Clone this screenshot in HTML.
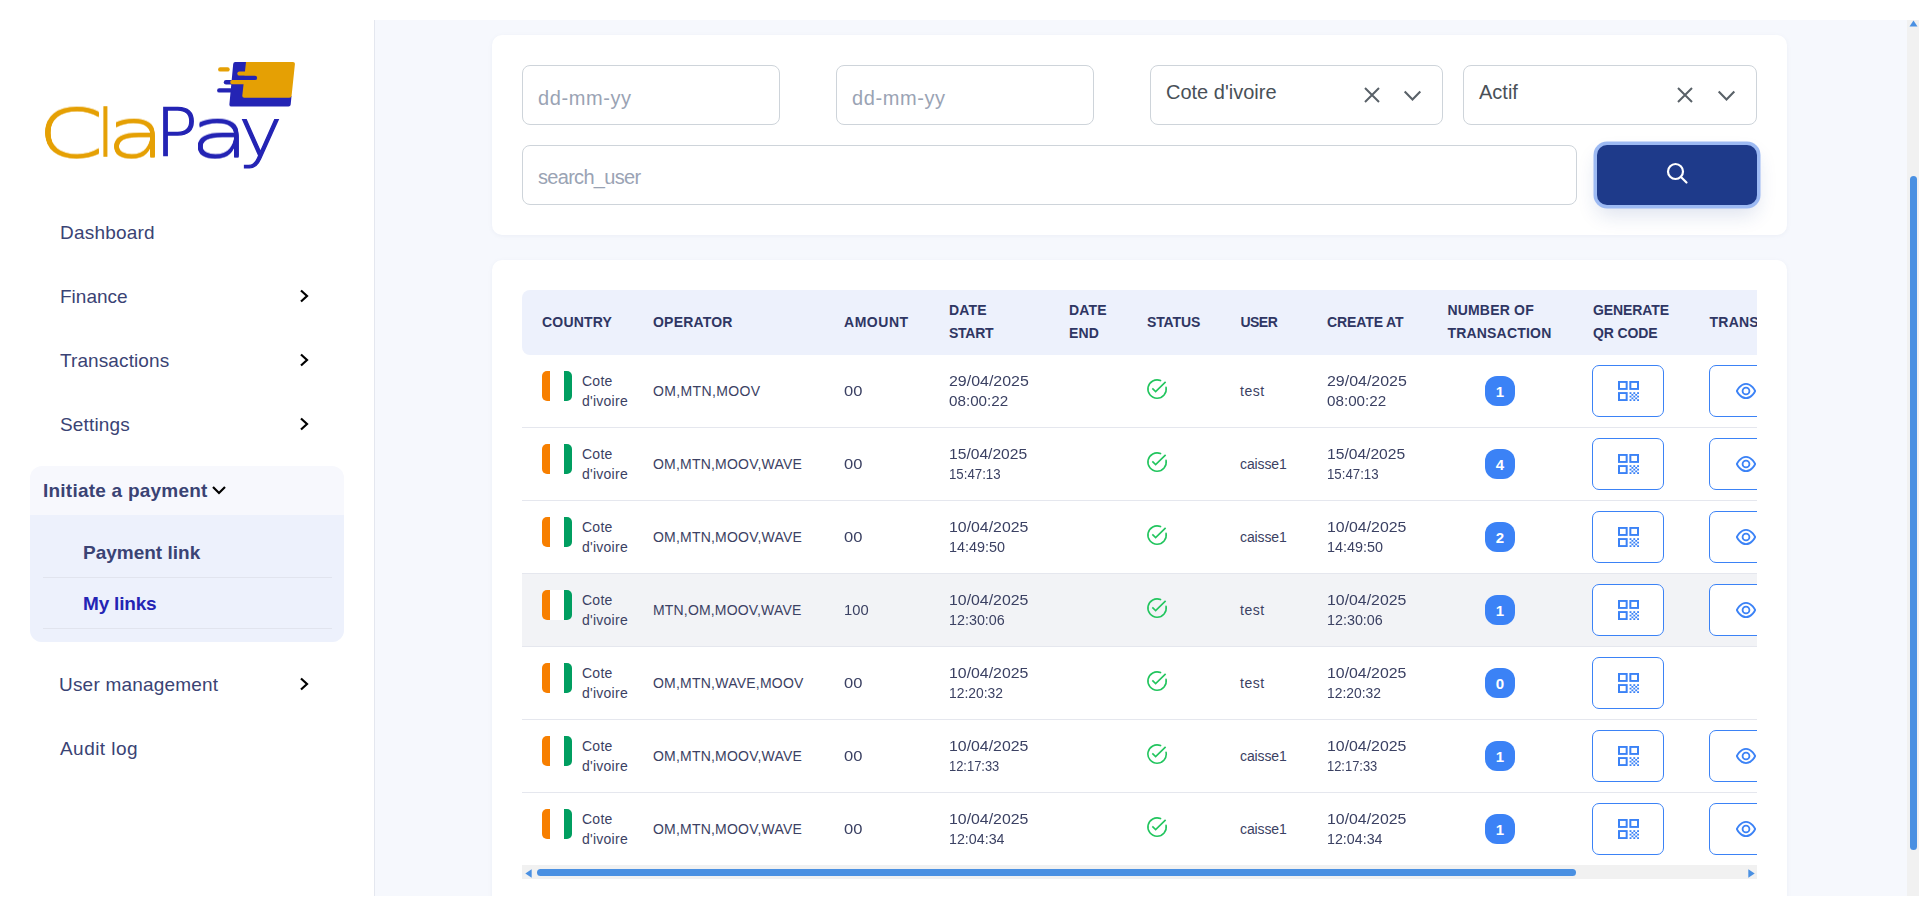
<!DOCTYPE html>
<html lang="en"><head><meta charset="utf-8"><title>ClaPay - My links</title>
<style>
*{box-sizing:border-box;margin:0;padding:0}
html,body{width:1919px;height:913px;overflow:hidden;background:#fff;font-family:"Liberation Sans",sans-serif}
#side{position:absolute;left:0;top:0;width:374px;height:913px;background:#fff}
#main{position:absolute;left:374px;top:20px;width:1545px;height:876px;background:#f6f8fd;border-left:1px solid #e4e7ef;overflow:hidden}
.nav{position:absolute;left:60px;font-size:19px;color:#3a4374;white-space:nowrap;line-height:22px}
.chev{position:absolute;left:299px;width:10px;height:14px}
#grp{position:absolute;left:30px;top:466px;width:314px;height:176px;border-radius:12px;background:#f7f8fd;overflow:hidden}
#grp .sub{position:absolute;left:0;top:49px;width:314px;height:127px;background:#edf1fc}
#grp .hd{position:absolute;left:13px;top:14px;font-size:19px;font-weight:700;color:#3a4374;white-space:nowrap;line-height:22px}
#grp .it{position:absolute;left:53px;font-size:19px;font-weight:700;color:#3a4374;white-space:nowrap;line-height:22px}
#grp .ln{position:absolute;left:13px;width:289px;height:1px;background:#e1e4ee}
.card{position:absolute;background:#fff;border-radius:10px;box-shadow:0 1px 4px rgba(120,130,160,.08)}
#c1{left:117px;top:15px;width:1295px;height:200px}
#c2{left:117px;top:240px;width:1295px;height:700px}
.inp{position:absolute;height:60px;border:1px solid #ced4da;border-radius:8px;background:#fff;font-size:20px;color:#9aa3b4;line-height:58px;padding-left:15px;padding-top:3px;white-space:nowrap}
.sel{color:#495057}
.sel span.t{position:relative;top:-6px}
.xi{position:absolute;top:21px;width:16px;height:16px}
.di{position:absolute;top:23px;width:19px;height:12.500px}
#sbtn{position:absolute;left:1105px;top:110px;width:160px;height:60px;border-radius:10px;background:#1e3a8a;box-shadow:0 0 0 3.500px #9dbaf3,0 10px 20px rgba(30,58,138,.15)}
#sbtn svg{position:absolute;left:68px;top:16px}
#tbl{position:absolute;left:30px;top:30px;width:1235px;height:589px;overflow:hidden}
#th{position:absolute;left:0;top:0;width:1400px;height:65px;background:#edf1fc;border-radius:8px 0 0 8px}
.h{position:absolute;font-size:14px;font-weight:700;color:#2f3663;line-height:23px;white-space:nowrap;letter-spacing:.2px}
.h1{top:20.6px}.h2{top:9.4px}
.tr{position:absolute;left:0;width:1400px;height:73px;border-bottom:1px solid #e5e7ee}
.tr.hov{background:#f2f3f6}
.flag{position:absolute;left:20px;top:16px;width:30px;height:30px;border-radius:5px;overflow:hidden;background:#fff}
.flag i{position:absolute;top:0;height:30px;width:8px}
.flag .o{left:0;background:#f77f00}
.flag .g{right:0;background:#009e60}
.c{position:absolute;font-size:14px;color:#3b4163;line-height:20px;white-space:nowrap}
.cn{left:60px;top:16px;letter-spacing:.25px}
.op{left:131px;top:26px}
.am{left:322px;top:26px}
.ds{left:427px;top:16px}
.st{left:624px;top:23px}
.us{left:718px;top:26px}
.ca{left:805px;top:16px}
.badge{position:absolute;left:963px;top:21px;width:30px;height:30px;border-radius:12px;background:#3b82f6;color:#fff;font-size:15px;font-weight:700;text-align:center;line-height:31px}
.btn{position:absolute;top:10px;width:72px;height:52px;border:1px solid #3b82f6;border-radius:7px;background:#fff}
.qrb{left:1070px}
.eyb{left:1187px}
.qrb svg{position:absolute;left:25px;top:15px}
.eyb svg{position:absolute;left:25.500px;top:15px}
#hs{position:absolute;left:0;top:575px;width:1235px;height:14px;background:#f1f1f1}
#hs .thumb{position:absolute;left:15px;top:4px;width:1039px;height:7px;border-radius:4px;background:#4a90e2}
#vs{position:absolute;left:1532px;top:0;width:12px;height:876px;background:#f1f1f1}
#vs .thumb{position:absolute;left:3px;top:156px;width:7px;height:674px;border-radius:4px;background:#4a90e2}
.fx{display:inline-block;transform-origin:0 50%;white-space:nowrap}

</style></head><body>
<div id="side">
<svg id="logo" style="position:absolute;left:0;top:0" width="374" height="200" viewBox="0 0 374 200" role="img" aria-label="ClaPay">
<path d="M235.200 62.100H262V96H291.500l-.8 8.500q-.2 2-2.200 2H231.400q-2.200 0-2-2.200L233.200 64q.2-1.900 2-1.900z" fill="#2424b4"/>
<path d="M246 62.100h47q2.100 0 1.900 2.100L291.600 95.700q-.2 2-2.200 2H244.200q-2.100 0-1.900-2.100z" fill="#e5a004"/>
<g stroke-linecap="round" stroke-width="4.400" fill="none">
<path d="M220.300 69.400h7.200" stroke="#e5a004"/>
<path d="M239.500 73.600h8" stroke="#e5a004"/>
<path d="M239.500 77.900h15.400" stroke="#2424b4"/>
<path d="M226 82.300h5" stroke="#2424b4"/>
<path d="M232.400 82.100h13" stroke="#e5a004"/>
<path d="M219.300 90.400h11" stroke="#2424b4"/>
</g>
<g font-family="'DejaVu Sans Light','DejaVu Sans',sans-serif" font-weight="200" font-size="100"><text transform="matrix(0.9500 0 0 0.6645 37.60 156.94)" fill="#e5a004" style="filter:drop-shadow(0 1.05px 0 #e5a004) drop-shadow(0 -1.05px 0 #e5a004)">C</text><text transform="matrix(0.6000 0 0 0.6368 97.35 156.25)" fill="#e5a004" stroke="#e5a004" stroke-width="1.3" vector-effect="non-scaling-stroke">l</text><text transform="matrix(0.9643 0 0 0.6614 106.49 156.54)" fill="#e5a004" style="filter:drop-shadow(0 1.06px 0 #e5a004) drop-shadow(0 -1.06px 0 #e5a004)">a</text><text transform="matrix(0.7024 0 0 0.6630 155.32 156.25)" fill="#2424b4" stroke="#2424b4" stroke-width="1.3" vector-effect="non-scaling-stroke">P</text><text transform="matrix(0.9714 0 0 0.6614 190.03 156.54)" fill="#2424b4" style="filter:drop-shadow(0 1.06px 0 #2424b4) drop-shadow(0 -1.06px 0 #2424b4)">a</text><text transform="matrix(0.7340 0 0 0.6575 238.65 156.16)" fill="#2424b4" stroke="#2424b4" stroke-width="1.3" vector-effect="non-scaling-stroke">y</text></g>
</svg>
<div class="nav" style="top:222px;letter-spacing:.2px">Dashboard</div>
<div class="nav" style="top:286px">Finance</div>
<div class="nav" style="top:350px;letter-spacing:.1px">Transactions</div>
<div class="nav" style="top:414px;letter-spacing:.15px">Settings</div>
<svg class="chev" style="top:289px" viewBox="0 0 10 14"><path d="M2 1.500 8 7 2 12.500" fill="none" stroke="#000" stroke-width="2.200"/></svg>
<svg class="chev" style="top:353px" viewBox="0 0 10 14"><path d="M2 1.500 8 7 2 12.500" fill="none" stroke="#000" stroke-width="2.200"/></svg>
<svg class="chev" style="top:417px" viewBox="0 0 10 14"><path d="M2 1.500 8 7 2 12.500" fill="none" stroke="#000" stroke-width="2.200"/></svg>
<div id="grp"><div class="sub"></div>
<div class="hd" style="letter-spacing:.23px">Initiate a payment</div>
<svg style="position:absolute;left:181px;top:19px" width="16" height="11" viewBox="0 0 16 11"><path d="M2 2 8 8 14 2" fill="none" stroke="#000" stroke-width="2.200"/></svg>
<div class="it" style="top:76px">Payment link</div>
<div class="ln" style="top:111px"></div>
<div class="it" style="top:127px;color:#2424b4;letter-spacing:-.2px">My links</div>
<div class="ln" style="top:162px"></div>
</div>
<div class="nav" style="top:674px;left:59px;letter-spacing:.2px">User management</div>
<svg class="chev" style="top:677px" viewBox="0 0 10 14"><path d="M2 1.500 8 7 2 12.500" fill="none" stroke="#000" stroke-width="2.200"/></svg>
<div class="nav" style="top:738px;letter-spacing:.45px">Audit log</div>
</div>
<div id="main">
<div class="card" id="c1">
<div class="inp" style="left:30px;top:30px;width:258px"><span style="letter-spacing:.6px">dd-mm-yy</span></div>
<div class="inp" style="left:344px;top:30px;width:258px"><span style="letter-spacing:.6px">dd-mm-yy</span></div>
<div class="inp sel" style="left:658px;top:30px;width:293px"><span class="t">Cote d'ivoire</span>
<svg class="xi" style="left:213px" viewBox="0 0 16 16"><path d="M1 1l14 14M15 1 1 15" stroke="#596168" stroke-width="2" fill="none"/></svg>
<svg class="di" style="left:251.500px" viewBox="0 0 18 12"><path d="M1.500 2.500 9 10l7.500-7.500" stroke="#596168" stroke-width="2" fill="none"/></svg></div>
<div class="inp sel" style="left:971px;top:30px;width:294px"><span class="t">Actif</span>
<svg class="xi" style="left:213px" viewBox="0 0 16 16"><path d="M1 1l14 14M15 1 1 15" stroke="#596168" stroke-width="2" fill="none"/></svg>
<svg class="di" style="left:252.500px" viewBox="0 0 18 12"><path d="M1.500 2.500 9 10l7.500-7.500" stroke="#596168" stroke-width="2" fill="none"/></svg></div>
<div class="inp" style="left:30px;top:110px;width:1055px"><span style="letter-spacing:-.7px;position:relative;top:-1px">search_user</span></div>
<div id="sbtn"><svg width="24" height="24" viewBox="0 0 24 24" fill="none" stroke="#fff" stroke-width="2.200" stroke-linecap="round"><circle cx="10.500" cy="10.500" r="7.500"/><path d="M16 16l5.500 5.500"/></svg></div>
</div>
<div class="card" id="c2">
<div id="tbl">
<div id="th">
<div class="h h1" style="left:20px">COUNTRY</div>
<div class="h h1" style="left:131px">OPERATOR</div>
<div class="h h1" style="left:322px;letter-spacing:.53px">AMOUNT</div>
<div class="h h2" style="left:427px">DATE<br><span style="letter-spacing:-.24px">START</span></div>
<div class="h h2" style="left:547px">DATE<br>END</div>
<div class="h h1" style="left:625px;letter-spacing:-.13px">STATUS</div>
<div class="h h1" style="left:718.500px;letter-spacing:-.55px">USER</div>
<div class="h h1" style="left:805px;letter-spacing:-.11px">CREATE AT</div>
<div class="h h2" style="left:925.4px">NUMBER OF<br>TRANSACTION</div>
<div class="h h2" style="left:1071px;letter-spacing:-.11px">GENERATE<br>QR CODE</div>
<div class="h h1" style="left:1187.6px">TRANSACTION</div>
</div>

<div class="tr" style="top:65px">
<div class="flag"><i class="o"></i><i class="g"></i></div>
<div class="c cn">Cote<br>d'ivoire</div>
<div class="c op"><span style="letter-spacing:0.369px">OM,MTN,MOOV</span></div>
<div class="c am"><span class="fx" style="transform:scaleX(1.1811)">00</span></div>
<div class="c ds"><span class="fx" style="transform:scaleX(1.1387)">29/04/2025</span><br><span class="fx" style="transform:scaleX(1.0862)">08:00:22</span></div>
<div class="c st"><svg class="chk" viewBox="0 0 24 24" width="22" height="22" fill="none" stroke="#22c55e" stroke-width="1.750" stroke-linejoin="miter"><path d="M21.900 10.200a10 10 0 1 1-6-7.400" stroke-linecap="round"/><path d="M6.900 11.400l3.600 3.500L21.400 4.300"/></svg></div>
<div class="c us"><span style="letter-spacing:0.505px">test</span></div>
<div class="c ca"><span class="fx" style="transform:scaleX(1.1387)">29/04/2025</span><br><span class="fx" style="transform:scaleX(1.0862)">08:00:22</span></div>
<div class="badge">1</div>
<div class="btn qrb"><svg class="qr" viewBox="0 0 20 20" width="21" height="20" preserveAspectRatio="none" fill="none" stroke="#3b82f6" stroke-width="1.900"><rect x="0.950" y="0.950" width="7.300" height="7"/><rect x="11.750" y="0.950" width="7.300" height="7"/><rect x="0.950" y="12.050" width="7.300" height="7"/><g fill="#3b82f6" stroke="none"><rect x="11.00" y="11.20" width="1.8" height="1.76"/><rect x="14.60" y="11.20" width="1.8" height="1.76"/><rect x="18.20" y="11.20" width="1.8" height="1.76"/><rect x="12.80" y="12.96" width="1.8" height="1.76"/><rect x="16.40" y="12.96" width="1.8" height="1.76"/><rect x="11.00" y="14.72" width="1.8" height="1.76"/><rect x="14.60" y="14.72" width="1.8" height="1.76"/><rect x="18.20" y="14.72" width="1.8" height="1.76"/><rect x="12.80" y="16.48" width="1.8" height="1.76"/><rect x="16.40" y="16.48" width="1.8" height="1.76"/><rect x="11.00" y="18.24" width="1.8" height="1.76"/><rect x="14.60" y="18.24" width="1.8" height="1.76"/><rect x="18.20" y="18.24" width="1.8" height="1.76"/></g></svg></div>
<div class="btn eyb"><svg class="eye" viewBox="0 0 24 24" width="20" height="20" fill="none" stroke="#3b82f6" stroke-width="2.200" stroke-linecap="round" stroke-linejoin="round"><path d="M1 12s4-8.600 11-8.600S23 12 23 12s-4 8.600-11 8.600S1 12 1 12z"/><circle cx="12" cy="12" r="4.100"/></svg></div>
</div>
<div class="tr" style="top:138px">
<div class="flag"><i class="o"></i><i class="g"></i></div>
<div class="c cn">Cote<br>d'ivoire</div>
<div class="c op"><span style="letter-spacing:0.205px">OM,MTN,MOOV,WAVE</span></div>
<div class="c am"><span class="fx" style="transform:scaleX(1.1811)">00</span></div>
<div class="c ds"><span class="fx" style="transform:scaleX(1.1159)">15/04/2025</span><br><span class="fx" style="transform:scaleX(0.9468)">15:47:13</span></div>
<div class="c st"><svg class="chk" viewBox="0 0 24 24" width="22" height="22" fill="none" stroke="#22c55e" stroke-width="1.750" stroke-linejoin="miter"><path d="M21.900 10.200a10 10 0 1 1-6-7.400" stroke-linecap="round"/><path d="M6.900 11.400l3.600 3.500L21.400 4.300"/></svg></div>
<div class="c us"><span style="letter-spacing:-0.124px">caisse1</span></div>
<div class="c ca"><span class="fx" style="transform:scaleX(1.1159)">15/04/2025</span><br><span class="fx" style="transform:scaleX(0.9468)">15:47:13</span></div>
<div class="badge">4</div>
<div class="btn qrb"><svg class="qr" viewBox="0 0 20 20" width="21" height="20" preserveAspectRatio="none" fill="none" stroke="#3b82f6" stroke-width="1.900"><rect x="0.950" y="0.950" width="7.300" height="7"/><rect x="11.750" y="0.950" width="7.300" height="7"/><rect x="0.950" y="12.050" width="7.300" height="7"/><g fill="#3b82f6" stroke="none"><rect x="11.00" y="11.20" width="1.8" height="1.76"/><rect x="14.60" y="11.20" width="1.8" height="1.76"/><rect x="18.20" y="11.20" width="1.8" height="1.76"/><rect x="12.80" y="12.96" width="1.8" height="1.76"/><rect x="16.40" y="12.96" width="1.8" height="1.76"/><rect x="11.00" y="14.72" width="1.8" height="1.76"/><rect x="14.60" y="14.72" width="1.8" height="1.76"/><rect x="18.20" y="14.72" width="1.8" height="1.76"/><rect x="12.80" y="16.48" width="1.8" height="1.76"/><rect x="16.40" y="16.48" width="1.8" height="1.76"/><rect x="11.00" y="18.24" width="1.8" height="1.76"/><rect x="14.60" y="18.24" width="1.8" height="1.76"/><rect x="18.20" y="18.24" width="1.8" height="1.76"/></g></svg></div>
<div class="btn eyb"><svg class="eye" viewBox="0 0 24 24" width="20" height="20" fill="none" stroke="#3b82f6" stroke-width="2.200" stroke-linecap="round" stroke-linejoin="round"><path d="M1 12s4-8.600 11-8.600S23 12 23 12s-4 8.600-11 8.600S1 12 1 12z"/><circle cx="12" cy="12" r="4.100"/></svg></div>
</div>
<div class="tr" style="top:211px">
<div class="flag"><i class="o"></i><i class="g"></i></div>
<div class="c cn">Cote<br>d'ivoire</div>
<div class="c op"><span style="letter-spacing:0.205px">OM,MTN,MOOV,WAVE</span></div>
<div class="c am"><span class="fx" style="transform:scaleX(1.1811)">00</span></div>
<div class="c ds"><span class="fx" style="transform:scaleX(1.1330)">10/04/2025</span><br><span class="fx" style="transform:scaleX(1.0275)">14:49:50</span></div>
<div class="c st"><svg class="chk" viewBox="0 0 24 24" width="22" height="22" fill="none" stroke="#22c55e" stroke-width="1.750" stroke-linejoin="miter"><path d="M21.900 10.200a10 10 0 1 1-6-7.400" stroke-linecap="round"/><path d="M6.900 11.400l3.600 3.500L21.400 4.300"/></svg></div>
<div class="c us"><span style="letter-spacing:-0.124px">caisse1</span></div>
<div class="c ca"><span class="fx" style="transform:scaleX(1.1330)">10/04/2025</span><br><span class="fx" style="transform:scaleX(1.0275)">14:49:50</span></div>
<div class="badge">2</div>
<div class="btn qrb"><svg class="qr" viewBox="0 0 20 20" width="21" height="20" preserveAspectRatio="none" fill="none" stroke="#3b82f6" stroke-width="1.900"><rect x="0.950" y="0.950" width="7.300" height="7"/><rect x="11.750" y="0.950" width="7.300" height="7"/><rect x="0.950" y="12.050" width="7.300" height="7"/><g fill="#3b82f6" stroke="none"><rect x="11.00" y="11.20" width="1.8" height="1.76"/><rect x="14.60" y="11.20" width="1.8" height="1.76"/><rect x="18.20" y="11.20" width="1.8" height="1.76"/><rect x="12.80" y="12.96" width="1.8" height="1.76"/><rect x="16.40" y="12.96" width="1.8" height="1.76"/><rect x="11.00" y="14.72" width="1.8" height="1.76"/><rect x="14.60" y="14.72" width="1.8" height="1.76"/><rect x="18.20" y="14.72" width="1.8" height="1.76"/><rect x="12.80" y="16.48" width="1.8" height="1.76"/><rect x="16.40" y="16.48" width="1.8" height="1.76"/><rect x="11.00" y="18.24" width="1.8" height="1.76"/><rect x="14.60" y="18.24" width="1.8" height="1.76"/><rect x="18.20" y="18.24" width="1.8" height="1.76"/></g></svg></div>
<div class="btn eyb"><svg class="eye" viewBox="0 0 24 24" width="20" height="20" fill="none" stroke="#3b82f6" stroke-width="2.200" stroke-linecap="round" stroke-linejoin="round"><path d="M1 12s4-8.600 11-8.600S23 12 23 12s-4 8.600-11 8.600S1 12 1 12z"/><circle cx="12" cy="12" r="4.100"/></svg></div>
</div>
<div class="tr hov" style="top:284px">
<div class="flag"><i class="o"></i><i class="g"></i></div>
<div class="c cn">Cote<br>d'ivoire</div>
<div class="c op"><span style="letter-spacing:0.168px">MTN,OM,MOOV,WAVE</span></div>
<div class="c am"><span class="fx" style="transform:scaleX(1.0531)">100</span></div>
<div class="c ds"><span class="fx" style="transform:scaleX(1.1330)">10/04/2025</span><br><span class="fx" style="transform:scaleX(1.0239)">12:30:06</span></div>
<div class="c st"><svg class="chk" viewBox="0 0 24 24" width="22" height="22" fill="none" stroke="#22c55e" stroke-width="1.750" stroke-linejoin="miter"><path d="M21.900 10.200a10 10 0 1 1-6-7.400" stroke-linecap="round"/><path d="M6.900 11.400l3.600 3.500L21.400 4.300"/></svg></div>
<div class="c us"><span style="letter-spacing:0.505px">test</span></div>
<div class="c ca"><span class="fx" style="transform:scaleX(1.1330)">10/04/2025</span><br><span class="fx" style="transform:scaleX(1.0239)">12:30:06</span></div>
<div class="badge">1</div>
<div class="btn qrb"><svg class="qr" viewBox="0 0 20 20" width="21" height="20" preserveAspectRatio="none" fill="none" stroke="#3b82f6" stroke-width="1.900"><rect x="0.950" y="0.950" width="7.300" height="7"/><rect x="11.750" y="0.950" width="7.300" height="7"/><rect x="0.950" y="12.050" width="7.300" height="7"/><g fill="#3b82f6" stroke="none"><rect x="11.00" y="11.20" width="1.8" height="1.76"/><rect x="14.60" y="11.20" width="1.8" height="1.76"/><rect x="18.20" y="11.20" width="1.8" height="1.76"/><rect x="12.80" y="12.96" width="1.8" height="1.76"/><rect x="16.40" y="12.96" width="1.8" height="1.76"/><rect x="11.00" y="14.72" width="1.8" height="1.76"/><rect x="14.60" y="14.72" width="1.8" height="1.76"/><rect x="18.20" y="14.72" width="1.8" height="1.76"/><rect x="12.80" y="16.48" width="1.8" height="1.76"/><rect x="16.40" y="16.48" width="1.8" height="1.76"/><rect x="11.00" y="18.24" width="1.8" height="1.76"/><rect x="14.60" y="18.24" width="1.8" height="1.76"/><rect x="18.20" y="18.24" width="1.8" height="1.76"/></g></svg></div>
<div class="btn eyb"><svg class="eye" viewBox="0 0 24 24" width="20" height="20" fill="none" stroke="#3b82f6" stroke-width="2.200" stroke-linecap="round" stroke-linejoin="round"><path d="M1 12s4-8.600 11-8.600S23 12 23 12s-4 8.600-11 8.600S1 12 1 12z"/><circle cx="12" cy="12" r="4.100"/></svg></div>
</div>
<div class="tr" style="top:357px">
<div class="flag"><i class="o"></i><i class="g"></i></div>
<div class="c cn">Cote<br>d'ivoire</div>
<div class="c op"><span style="letter-spacing:0.225px">OM,MTN,WAVE,MOOV</span></div>
<div class="c am"><span class="fx" style="transform:scaleX(1.1811)">00</span></div>
<div class="c ds"><span class="fx" style="transform:scaleX(1.1330)">10/04/2025</span><br><span class="fx" style="transform:scaleX(0.9908)">12:20:32</span></div>
<div class="c st"><svg class="chk" viewBox="0 0 24 24" width="22" height="22" fill="none" stroke="#22c55e" stroke-width="1.750" stroke-linejoin="miter"><path d="M21.900 10.200a10 10 0 1 1-6-7.400" stroke-linecap="round"/><path d="M6.900 11.400l3.600 3.500L21.400 4.300"/></svg></div>
<div class="c us"><span style="letter-spacing:0.505px">test</span></div>
<div class="c ca"><span class="fx" style="transform:scaleX(1.1330)">10/04/2025</span><br><span class="fx" style="transform:scaleX(0.9908)">12:20:32</span></div>
<div class="badge">0</div>
<div class="btn qrb"><svg class="qr" viewBox="0 0 20 20" width="21" height="20" preserveAspectRatio="none" fill="none" stroke="#3b82f6" stroke-width="1.900"><rect x="0.950" y="0.950" width="7.300" height="7"/><rect x="11.750" y="0.950" width="7.300" height="7"/><rect x="0.950" y="12.050" width="7.300" height="7"/><g fill="#3b82f6" stroke="none"><rect x="11.00" y="11.20" width="1.8" height="1.76"/><rect x="14.60" y="11.20" width="1.8" height="1.76"/><rect x="18.20" y="11.20" width="1.8" height="1.76"/><rect x="12.80" y="12.96" width="1.8" height="1.76"/><rect x="16.40" y="12.96" width="1.8" height="1.76"/><rect x="11.00" y="14.72" width="1.8" height="1.76"/><rect x="14.60" y="14.72" width="1.8" height="1.76"/><rect x="18.20" y="14.72" width="1.8" height="1.76"/><rect x="12.80" y="16.48" width="1.8" height="1.76"/><rect x="16.40" y="16.48" width="1.8" height="1.76"/><rect x="11.00" y="18.24" width="1.8" height="1.76"/><rect x="14.60" y="18.24" width="1.8" height="1.76"/><rect x="18.20" y="18.24" width="1.8" height="1.76"/></g></svg></div>
</div>
<div class="tr" style="top:430px">
<div class="flag"><i class="o"></i><i class="g"></i></div>
<div class="c cn">Cote<br>d'ivoire</div>
<div class="c op"><span style="letter-spacing:0.205px">OM,MTN,MOOV,WAVE</span></div>
<div class="c am"><span class="fx" style="transform:scaleX(1.1811)">00</span></div>
<div class="c ds"><span class="fx" style="transform:scaleX(1.1330)">10/04/2025</span><br><span class="fx" style="transform:scaleX(0.9229)">12:17:33</span></div>
<div class="c st"><svg class="chk" viewBox="0 0 24 24" width="22" height="22" fill="none" stroke="#22c55e" stroke-width="1.750" stroke-linejoin="miter"><path d="M21.900 10.200a10 10 0 1 1-6-7.400" stroke-linecap="round"/><path d="M6.900 11.400l3.600 3.500L21.400 4.300"/></svg></div>
<div class="c us"><span style="letter-spacing:-0.124px">caisse1</span></div>
<div class="c ca"><span class="fx" style="transform:scaleX(1.1330)">10/04/2025</span><br><span class="fx" style="transform:scaleX(0.9229)">12:17:33</span></div>
<div class="badge">1</div>
<div class="btn qrb"><svg class="qr" viewBox="0 0 20 20" width="21" height="20" preserveAspectRatio="none" fill="none" stroke="#3b82f6" stroke-width="1.900"><rect x="0.950" y="0.950" width="7.300" height="7"/><rect x="11.750" y="0.950" width="7.300" height="7"/><rect x="0.950" y="12.050" width="7.300" height="7"/><g fill="#3b82f6" stroke="none"><rect x="11.00" y="11.20" width="1.8" height="1.76"/><rect x="14.60" y="11.20" width="1.8" height="1.76"/><rect x="18.20" y="11.20" width="1.8" height="1.76"/><rect x="12.80" y="12.96" width="1.8" height="1.76"/><rect x="16.40" y="12.96" width="1.8" height="1.76"/><rect x="11.00" y="14.72" width="1.8" height="1.76"/><rect x="14.60" y="14.72" width="1.8" height="1.76"/><rect x="18.20" y="14.72" width="1.8" height="1.76"/><rect x="12.80" y="16.48" width="1.8" height="1.76"/><rect x="16.40" y="16.48" width="1.8" height="1.76"/><rect x="11.00" y="18.24" width="1.8" height="1.76"/><rect x="14.60" y="18.24" width="1.8" height="1.76"/><rect x="18.20" y="18.24" width="1.8" height="1.76"/></g></svg></div>
<div class="btn eyb"><svg class="eye" viewBox="0 0 24 24" width="20" height="20" fill="none" stroke="#3b82f6" stroke-width="2.200" stroke-linecap="round" stroke-linejoin="round"><path d="M1 12s4-8.600 11-8.600S23 12 23 12s-4 8.600-11 8.600S1 12 1 12z"/><circle cx="12" cy="12" r="4.100"/></svg></div>
</div>
<div class="tr" style="top:503px">
<div class="flag"><i class="o"></i><i class="g"></i></div>
<div class="c cn">Cote<br>d'ivoire</div>
<div class="c op"><span style="letter-spacing:0.205px">OM,MTN,MOOV,WAVE</span></div>
<div class="c am"><span class="fx" style="transform:scaleX(1.1811)">00</span></div>
<div class="c ds"><span class="fx" style="transform:scaleX(1.1330)">10/04/2025</span><br><span class="fx" style="transform:scaleX(1.0183)">12:04:34</span></div>
<div class="c st"><svg class="chk" viewBox="0 0 24 24" width="22" height="22" fill="none" stroke="#22c55e" stroke-width="1.750" stroke-linejoin="miter"><path d="M21.900 10.200a10 10 0 1 1-6-7.400" stroke-linecap="round"/><path d="M6.900 11.400l3.600 3.500L21.400 4.300"/></svg></div>
<div class="c us"><span style="letter-spacing:-0.124px">caisse1</span></div>
<div class="c ca"><span class="fx" style="transform:scaleX(1.1330)">10/04/2025</span><br><span class="fx" style="transform:scaleX(1.0183)">12:04:34</span></div>
<div class="badge">1</div>
<div class="btn qrb"><svg class="qr" viewBox="0 0 20 20" width="21" height="20" preserveAspectRatio="none" fill="none" stroke="#3b82f6" stroke-width="1.900"><rect x="0.950" y="0.950" width="7.300" height="7"/><rect x="11.750" y="0.950" width="7.300" height="7"/><rect x="0.950" y="12.050" width="7.300" height="7"/><g fill="#3b82f6" stroke="none"><rect x="11.00" y="11.20" width="1.8" height="1.76"/><rect x="14.60" y="11.20" width="1.8" height="1.76"/><rect x="18.20" y="11.20" width="1.8" height="1.76"/><rect x="12.80" y="12.96" width="1.8" height="1.76"/><rect x="16.40" y="12.96" width="1.8" height="1.76"/><rect x="11.00" y="14.72" width="1.8" height="1.76"/><rect x="14.60" y="14.72" width="1.8" height="1.76"/><rect x="18.20" y="14.72" width="1.8" height="1.76"/><rect x="12.80" y="16.48" width="1.8" height="1.76"/><rect x="16.40" y="16.48" width="1.8" height="1.76"/><rect x="11.00" y="18.24" width="1.8" height="1.76"/><rect x="14.60" y="18.24" width="1.8" height="1.76"/><rect x="18.20" y="18.24" width="1.8" height="1.76"/></g></svg></div>
<div class="btn eyb"><svg class="eye" viewBox="0 0 24 24" width="20" height="20" fill="none" stroke="#3b82f6" stroke-width="2.200" stroke-linecap="round" stroke-linejoin="round"><path d="M1 12s4-8.600 11-8.600S23 12 23 12s-4 8.600-11 8.600S1 12 1 12z"/><circle cx="12" cy="12" r="4.100"/></svg></div>
</div>
<div id="hs"><svg style="position:absolute;left:3px;top:3.500px" width="7" height="9" viewBox="0 0 7 9"><path d="M6.700 0.300v8.400L0.300 4.500z" fill="#4a90e2"/></svg><div class="thumb"></div><svg style="position:absolute;left:1225.500px;top:3.500px" width="7" height="9" viewBox="0 0 7 9"><path d="M0.300 0.300v8.400L6.700 4.500z" fill="#4a90e2"/></svg></div>
</div>
</div>
<div id="vs"><svg style="position:absolute;left:2px;top:0" width="9" height="7" viewBox="0 0 9 7"><path d="M0.500 6.500h8L4.500 0.500z" fill="#4a90e2"/></svg><div class="thumb"></div></div>
</div>
</body></html>
